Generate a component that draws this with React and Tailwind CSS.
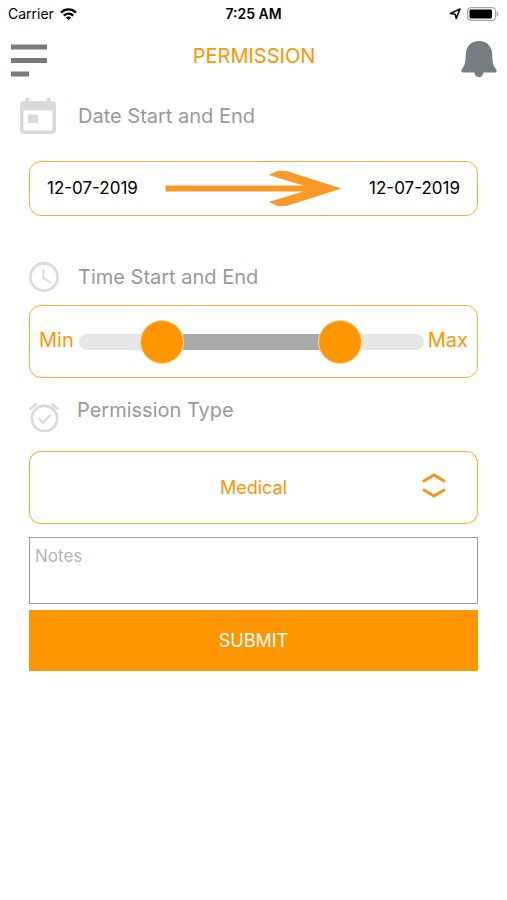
import React, { useState } from 'react';

const DAY_MINUTES = 1440;

const WifiIcon = () => (
  <svg width="17" height="12" viewBox="0 0 17 12" fill="none" stroke="#000" strokeWidth="2.3" aria-hidden="true">
    <path d="M1 4.6C5.2 .4 11.8 .4 16 4.6" />
    <path d="M3.8 7.6c2.7-2.6 6.7-2.6 9.4 0" />
    <path d="M8.5 12 5.9 9.5c1.5-1.3 3.700-1.300 5.200 0z" fill="#000" stroke="none" />
  </svg>
);

const LocationIcon = () => (
  <svg width="12" height="12" viewBox="0 0 12 12" fill="none" stroke="#111" strokeWidth="1.6" strokeLinejoin="round" aria-hidden="true">
    <path d="M11 1 7.200 10.400 6.200 6.200 1.400 5.400z" />
  </svg>
);

const BatteryIcon = () => (
  <svg width="32" height="14" viewBox="0 0 32 14" aria-hidden="true">
    <rect x=".7" y=".7" width="28" height="12.6" rx="3.6" fill="#fff" stroke="#a3a3a3" strokeWidth="1.2" />
    <rect x="2.500" y="2.500" width="22.500" height="9" rx="1.4" fill="#000" />
    <path d="M30 4.800c1.800.6 1.800 3.800 0 4.400z" fill="#a3a3a3" />
  </svg>
);

const MenuIcon = () => (
  <svg width="37" height="40" viewBox="0 0 37 40" fill="#757b7f" aria-hidden="true">
    <rect x="1" y="4.5" width="36" height="5" />
    <rect x="1" y="18" width="36" height="5" />
    <rect x="1" y="31.5" width="18" height="5" />
  </svg>
);

const BellIcon = () => (
  <svg width="36" height="40" viewBox="0 0 36 40" fill="#757f83" aria-hidden="true">
    <path d="M18 1C10 1 5.200 6.400 4.800 14c-.2 8-.9 11.500-4 15.300C-.2 30.800.5 32.500 2 32.500h11.400c.6 2.900 2.200 4.800 4.600 4.800s4-1.900 4.600-4.800H34c1.500 0 2.200-1.700 1.200-3.200-3.100-3.800-3.800-7.300-4-15.300C30.800 6.400 26 1 18 1z" />
  </svg>
);

const CalendarIcon = () => (
  <svg width="36" height="36" viewBox="0 0 36 36" fill="#d8dada" aria-hidden="true">
    <path
      fillRule="evenodd"
      d="M5.500 0h4v3h17V0h4v3H32a4 4 0 0 1 4 4v25a4 4 0 0 1-4 4H4a4 4 0 0 1-4-4V7a4 4 0 0 1 4-4h1.500zM3.500 12.500v18.500a1.500 1.500 0 0 0 1.500 1.500h26a1.500 1.500 0 0 0 1.500-1.500V12.500z"
    />
    <rect x="8" y="16.500" width="10" height="8.500" />
  </svg>
);

const ClockIcon = () => (
  <svg width="30" height="30" viewBox="0 0 30 30" fill="none" stroke="#d8dada" aria-hidden="true">
    <circle cx="15" cy="15" r="13.600" strokeWidth="2.600" />
    <path d="M14.500 7.500v8.500l8 5" strokeWidth="2" />
  </svg>
);

const AlarmIcon = () => (
  <svg width="30" height="30" viewBox="0 0 30 30" fill="none" stroke="#d8dada" aria-hidden="true">
    <circle cx="15.500" cy="16.500" r="12.600" strokeWidth="2.800" />
    <path d="M.9 7.200 7.900 1.500M29.100 7.200l-7-5.700" strokeWidth="2.600" />
    <path d="m9.500 16.500 4.500 4.300 7.500-7.800" strokeWidth="2.200" />
  </svg>
);

const ArrowIcon = () => (
  <svg className="h-9 w-full" viewBox="0 0 176 36" fill="#f99a27" aria-hidden="true">
    <path d="M0 14.500H138L103 4l9-4h9l55 17.500-55 17.500h-9L103 31l35-10.500H0z" />
  </svg>
);

const SelectArrows = () => (
  <svg width="24" height="26" viewBox="0 0 24 26" fill="none" stroke="#f7931e" strokeWidth="3" aria-hidden="true">
    <path d="M1 9.500 12 3l11 6.500M1 17.500 12 24l11-6.500" />
  </svg>
);

const thumbClass =
  'pointer-events-none absolute inset-0 m-0 h-11 w-full appearance-none bg-transparent [&::-webkit-slider-thumb]:pointer-events-auto [&::-webkit-slider-thumb]:size-11 [&::-webkit-slider-thumb]:cursor-pointer [&::-webkit-slider-thumb]:appearance-none [&::-webkit-slider-thumb]:rounded-full [&::-webkit-slider-thumb]:border [&::-webkit-slider-thumb]:border-[#ffd9a0] [&::-webkit-slider-thumb]:bg-[#ff9500]';

const App = () => {
  const [dates, setDates] = useState({ start: '12-07-2019', end: '12-07-2019' });
  const [range, setRange] = useState({ min: 290, max: 1145 });
  const [type, setType] = useState('Medical');
  const [notes, setNotes] = useState('');

  const handleSubmit = (e) => {
    e.preventDefault();
  };

  return (
    <div className="min-h-screen bg-white font-['Inter',sans-serif]">
      {/* Status bar */}
      <div className="grid h-7 grid-cols-3 items-center px-2 text-sm text-black">
        <div className="flex items-center gap-1.5">
          <span>Carrier</span>
          <WifiIcon />
        </div>
        <span className="text-center font-semibold">7:25 AM</span>
        <div className="flex items-center justify-end gap-1.5">
          <LocationIcon />
          <BatteryIcon />
        </div>
      </div>

      {/* Header */}
      <header className="flex items-start justify-between px-2.5 pt-3">
        <button type="button" aria-label="Menu">
          <MenuIcon />
        </button>
        <h1 className="text-xl leading-8 text-[#ff9500]">PERMISSION</h1>
        <button type="button" aria-label="Notifications">
          <BellIcon />
        </button>
      </header>

      <form onSubmit={handleSubmit} className="pt-[18px]">
        {/* Dates */}
        <div className="flex items-center pl-5">
          <div className="w-[58px]">
            <CalendarIcon />
          </div>
          <label htmlFor="startDate" className="text-xl text-[#999999]">Date Start and End</label>
        </div>
        <div className="mx-[29px] mt-[27px] flex h-[55px] items-center rounded-xl border border-[#ff9500]/80 px-[17px]">
          <input
            id="startDate"
            value={dates.start}
            onChange={(e) => setDates({ ...dates, start: e.target.value })}
            className="w-24 text-[17px] text-black outline-none"
          />
          <div className="flex-1 px-[21px]">
            <ArrowIcon />
          </div>
          <input
            aria-label="End date"
            value={dates.end}
            onChange={(e) => setDates({ ...dates, end: e.target.value })}
            className="w-24 text-right text-[17px] text-black outline-none"
          />
        </div>

        {/* Time range */}
        <div className="mt-[46px] flex items-center pl-[29px]">
          <div className="w-[49px]">
            <ClockIcon />
          </div>
          <label htmlFor="minTime" className="text-xl text-[#999999]">Time Start and End</label>
        </div>
        <div className="mx-[29px] mt-[13px] flex h-[73px] items-center rounded-xl border border-[#ff9500]/80 px-[9px] text-xl text-[#ff9500]">
          <span className="w-10 pb-1">Min</span>
          <div className="relative h-11 flex-1">
            <div className="absolute inset-x-0 top-[14px] h-4 rounded-full bg-[#e6e6e6]" />
            <div
              className="absolute top-[14px] h-4 bg-[#a9a9a9]"
              style={{
                left: `${(range.min / DAY_MINUTES) * 100}%`,
                right: `${100 - (range.max / DAY_MINUTES) * 100}%`,
              }}
            />
            <input
              id="minTime"
              type="range"
              max={DAY_MINUTES}
              value={range.min}
              onChange={(e) => setRange({ ...range, min: Math.min(Number(e.target.value), range.max) })}
              className={thumbClass}
            />
            <input
              aria-label="Max time"
              type="range"
              max={DAY_MINUTES}
              value={range.max}
              onChange={(e) => setRange({ ...range, max: Math.max(Number(e.target.value), range.min) })}
              className={thumbClass}
            />
          </div>
          <span className="w-11 pb-1 text-right">Max</span>
        </div>

        {/* Permission type */}
        <div className="mt-6 flex items-start pl-[29px]">
          <div className="w-12">
            <AlarmIcon />
          </div>
          <label htmlFor="type" className="text-xl leading-4 text-[#999999]">Permission Type</label>
        </div>
        <div className="relative mx-[29px] mt-[19px]">
          <select
            id="type"
            value={type}
            onChange={(e) => setType(e.target.value)}
            className="h-[73px] w-full appearance-none rounded-xl border border-[#ff9500]/80 bg-white text-center text-lg text-[#ff9500] outline-none [text-align-last:center]"
          >
            <option>Medical</option>
            <option>Personal</option>
          </select>
          <div className="pointer-events-none absolute top-[21px] right-8">
            <SelectArrows />
          </div>
        </div>

        <div className="mx-[29px] mt-[13px] flex flex-col gap-1.5">
          <textarea
            aria-label="Notes"
            placeholder="Notes"
            value={notes}
            onChange={(e) => setNotes(e.target.value)}
            className="h-[67px] resize-none border border-[#999999] px-[5px] py-1.5 text-[17px] text-black outline-none placeholder:text-[#b3b3b3]"
          />
          <button type="submit" className="h-[61px] bg-[#ff9500] text-lg text-white">
            SUBMIT
          </button>
        </div>
      </form>
    </div>
  );
};

export default App;
